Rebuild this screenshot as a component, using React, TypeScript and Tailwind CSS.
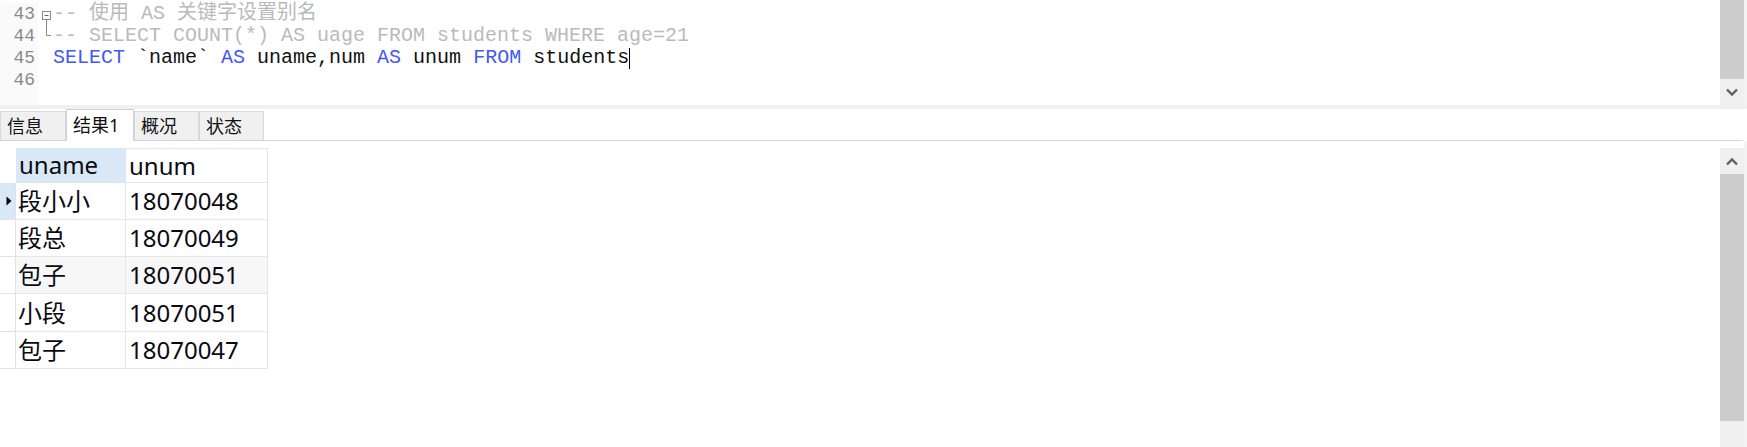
import React from 'react';

const mono = { fontFamily: '"Liberation Mono", "Noto Sans CJK SC", monospace' };
const sans = { fontFamily: '"Noto Sans", "Noto Sans CJK SC", sans-serif' };

const rows = [
  { name: '段小小', num: '18070048' },
  { name: '段总', num: '18070049' },
  { name: '包子', num: '18070051' },
  { name: '小段', num: '18070051' },
  { name: '包子', num: '18070047' },
];

const tabs = ['信息', '结果1', '概况', '状态'];

function Chevron({ up }: { up?: boolean }) {
  return (
    <svg width="12" height="9" viewBox="0 0 12 9">
      <path
        d={up ? 'M1 7.5 L6 2.5 L11 7.5' : 'M1 1.5 L6 6.5 L11 1.5'}
        fill="none"
        stroke="#606060"
        strokeWidth="2.4"
      />
    </svg>
  );
}

export default function App() {
  return (
    <div className="w-[1747px] h-[447px] bg-white flex flex-col overflow-hidden">
      {/* EDITOR */}
      <div className="h-[105px] flex">
        <div className="flex-1 flex text-[20px] leading-[22px] pt-[3px]" style={mono}>
          <div className="w-[38px] bg-[#fafafa] text-[#8a8a8a] text-[18px] text-right pr-[3px]">
            <div>43</div>
            <div>44</div>
            <div>45</div>
            <div>46</div>
          </div>
          <div className="w-[15px]">
            <svg width="15" height="40" viewBox="0 0 15 40">
              <rect x="4.5" y="8.5" width="8" height="8" fill="white" stroke="#8a8a8a" />
              <path d="M6.5 12.5 H10.5" stroke="#6a6a6a" />
              <path d="M8.5 16.5 V32.5 H13" fill="none" stroke="#8a8a8a" />
            </svg>
          </div>
          <div className="flex-1 whitespace-pre">
            <div className="text-[#bababa]">-- 使用 AS 关键字设置别名</div>
            <div className="text-[#bababa]">-- SELECT COUNT(*) AS uage FROM students WHERE age=21</div>
            <div className="text-[#111] flex items-center">
              <span className="text-[#4257f5]">SELECT</span> `name` <span className="text-[#4257f5]">AS</span> uname,num{' '}
              <span className="text-[#4257f5]">AS</span> unum <span className="text-[#4257f5]">FROM</span> students
              <span className="inline-block w-px h-[21px] bg-black" />
            </div>
            <div>&nbsp;</div>
          </div>
        </div>
        <div className="w-[24px] flex flex-col">
          <div className="h-[79px] bg-[#cdcdcd]" />
          <div className="flex-1 bg-[#f0f0f0] flex items-center justify-center">
            <Chevron />
          </div>
        </div>
        <div className="w-[3px] bg-[#f4f4f4]" />
      </div>

      {/* TABS */}
      <div className="h-[4px] bg-[#f0f0f0]" />
      <div className="h-[32px] mr-[4px] flex items-end border-b border-[#d4d4d4]" style={sans}>
        {tabs.map((t, i) =>
          i === 1 ? (
            <div
              key={t}
              className="w-[68px] h-[32px] -mb-px relative z-10 bg-white border border-b-0 border-[#d0d0d0] text-[18px] text-[#111] pl-[6px] flex items-center"
            >
              {t}
            </div>
          ) : (
            <div
              key={t}
              className={`${i === 0 ? 'w-[66px]' : 'w-[65px]'} h-[29px] bg-[#f0f0f0] border border-b-0 border-[#d9d9d9] text-[18px] text-[#111] pl-[6px] flex items-center`}
            >
              {t}
            </div>
          )
        )}
      </div>

      {/* RESULT GRID */}
      <div className="flex-1 flex">
        <div className="flex-1 pt-[7px] text-[24px] text-[#0a0a14]" style={sans}>
          <div className="flex h-[35px]">
            <div className="w-[16px]" />
            <div className="w-[110px] bg-[#d9e8f6] border-b border-[#e2e2e2] px-[3px] flex items-center">uname</div>
            <div className="w-[142px] border-t border-r border-b border-[#e6e6e6] px-[3px] flex items-center">unum</div>
          </div>
          {rows.map((r, i) => (
            <div key={i} className={`flex ${i === 3 ? 'h-[38px]' : 'h-[37px]'}`}>
              <div
                className={`w-[16px] border-b border-r border-[#e2e2e2] flex items-center pl-[6px] ${
                  i === 0 ? 'bg-[#d9e8f6]' : ''
                }`}
              >
                {i === 0 && (
                  <svg width="6" height="10" viewBox="0 0 6 10">
                    <path d="M0.5 0.5 L5.5 5 L0.5 9.5 Z" fill="#000" />
                  </svg>
                )}
              </div>
              <div
                className={`w-[110px] border-b border-r border-[#e6e6e6] px-[2px] flex items-center ${
                  i === 2 ? 'bg-[#f7f7f7]' : ''
                }`}
              >
                {r.name}
              </div>
              <div
                className={`w-[142px] border-b border-r border-[#e6e6e6] px-[3px] flex items-center ${
                  i === 2 ? 'bg-[#f7f7f7]' : ''
                }`}
              >
                {r.num}
              </div>
            </div>
          ))}
        </div>
        <div className="w-[24px] mt-[7px] flex flex-col">
          <div className="h-[26px] bg-[#f0f0f0] flex items-center justify-center">
            <Chevron up />
          </div>
          <div className="h-[247px] bg-[#cdcdcd]" />
          <div className="flex-1 bg-[#f0f0f0]" />
        </div>
        <div className="w-[3px] bg-[#f4f4f4]" />
      </div>
    </div>
  );
}
